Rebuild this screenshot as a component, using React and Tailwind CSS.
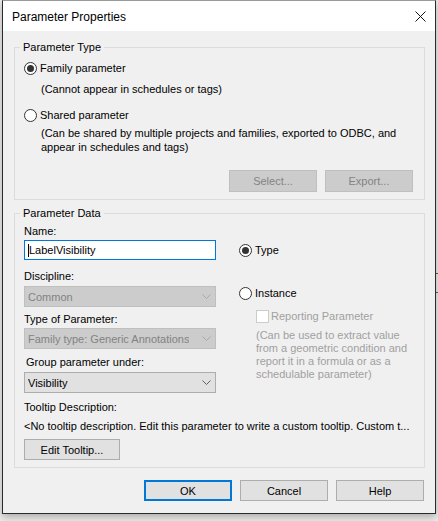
import React from "react";

function Radio({ checked }) {
  return (
    <span className="flex h-[13px] w-[13px] shrink-0 items-center justify-center rounded-full border border-[#333333] bg-white">
      {checked && <span className="h-[7px] w-[7px] rounded-full bg-[#333333]" />}
    </span>
  );
}

function Chevron({ disabled }) {
  return (
    <svg width="9" height="6" viewBox="0 0 9 6" className="shrink-0">
      <path
        d="M0.5 0.5 L4.5 4.5 L8.5 0.5"
        fill="none"
        stroke={disabled ? "#a8a8a8" : "#606060"}
        strokeWidth="1"
      />
    </svg>
  );
}

function Select({ value, disabled }) {
  return (
    <div
      className={
        disabled
          ? "flex h-[21px] w-[192px] items-center justify-between border border-[#bfbfbf] bg-[#cccccc] pl-[3px] pr-[4px] text-[#838383]"
          : "flex h-[21px] w-[192px] items-center justify-between border border-[#adadad] bg-[#e1e1e1] pl-[3px] pr-[4px] text-black"
      }
    >
      <span className="truncate">{value}</span>
      <Chevron disabled={disabled} />
    </div>
  );
}

function Button({ children, disabled, primary, wide }) {
  const base = wide ? "h-[22px] w-[88px]" : "h-[21px] w-[88px]";
  if (disabled) {
    return (
      <div className={`${base} flex items-center justify-center border border-[#bfbfbf] bg-[#cccccc] text-[#838383]`}>
        {children}
      </div>
    );
  }
  if (primary) {
    return (
      <div className={`${base} flex items-center justify-center border-2 border-[#0078d7] bg-[#e1e1e1] text-black`}>
        {children}
      </div>
    );
  }
  return (
    <div className={`${base} flex items-center justify-center border border-[#adadad] bg-[#e1e1e1] text-black`}>
      {children}
    </div>
  );
}

export default function App() {
  return (
    <div className="relative h-[521px] w-[438px] overflow-hidden bg-[#ececec] font-['Liberation_Sans',Arial,sans-serif] text-[11px] leading-[14px] text-black">
      {/* thin marks from the window behind, peeking past the right edge */}
      <span className="absolute left-[436px] top-[273px] h-px w-[2px] bg-[#1e7a1e]" />
      <span className="absolute left-[436px] top-[292px] h-px w-[2px] bg-[#1e7a1e]" />

      <div className="ml-[2px] flex w-[434px] flex-col border-x border-b border-t border-x-[#2a2a2a] border-b-[#2a2a2a] border-t-[#9a9a9a] bg-[#f0f0f0] shadow-[0_3px_8px_rgba(0,0,0,0.28)]">
        {/* title bar */}
        <div className="flex h-[30px] items-center justify-between bg-white pl-[9px] pr-[9px]">
          <span className="pt-[1px] text-[12px] leading-[16px]">Parameter Properties</span>
          <svg width="11" height="11" viewBox="0 0 11 11" className="mt-[1px]">
            <path d="M0.5 0.5 L10.5 10.5 M10.5 0.5 L0.5 10.5" stroke="#111" strokeWidth="1" />
          </svg>
        </div>

        {/* Parameter Type */}
        <fieldset className="ml-[11px] mr-[10px] mt-[9px] border border-[#dcdcdc] p-0">
          <legend className="ml-[5px] px-[3px] leading-[14px]">Parameter Type</legend>
          <div className="flex flex-col pb-[7px] pl-[9px] pr-[11px]">
            <div className="mt-[7px] flex h-[14px] items-center gap-[3px]">
              <Radio checked />
              <span>Family parameter</span>
            </div>
            <div className="mt-[7px] pl-[17px]">(Cannot appear in schedules or tags)</div>
            <div className="mt-[12px] flex h-[14px] items-center gap-[3px]">
              <Radio />
              <span>Shared parameter</span>
            </div>
            <div className="mt-[4px] pl-[17px]">
              (Can be shared by multiple projects and families, exported to ODBC, and
              <br />
              appear in schedules and tags)
            </div>
            <div className="mt-[16px] flex justify-end gap-[8px]">
              <Button disabled wide>Select...</Button>
              <Button disabled wide>Export...</Button>
            </div>
          </div>
        </fieldset>

        {/* Parameter Data */}
        <fieldset className="ml-[11px] mr-[10px] mt-[6px] border border-[#dcdcdc] p-0">
          <legend className="ml-[5px] px-[3px] leading-[14px]">Parameter Data</legend>
          <div className="flex flex-col pb-[7px] pl-[9px] pr-[9px]">
            <div className="flex">
              <div className="flex w-[192px] flex-col">
                <div className="mt-[4px]">Name:</div>
                <div className="relative mt-[2px] flex h-[20px] items-center border border-[#0078d7] bg-white pl-[4px]">
                  <span className="absolute left-[3px] top-[3px] h-[13px] w-px bg-black" />
                  <span>LabelVisibility</span>
                </div>
                <div className="mt-[9px]">Discipline:</div>
                <div className="mt-[3px]">
                  <Select value="Common" disabled />
                </div>
                <div className="mt-[5px]">Type of Parameter:</div>
                <div className="mt-[2px]">
                  <Select value="Family type: Generic Annotations" disabled />
                </div>
                <div className="ml-[2px] mt-[6px]">Group parameter under:</div>
                <div className="mt-[3px]">
                  <Select value="Visibility" />
                </div>
              </div>

              <div className="ml-[23px] flex flex-col">
                <div className="mt-[23px] flex h-[14px] items-center gap-[3px]">
                  <Radio checked />
                  <span>Type</span>
                </div>
                <div className="mt-[29px] flex h-[14px] items-center gap-[3px]">
                  <Radio />
                  <span>Instance</span>
                </div>
                <div className="ml-[17px] mt-[9px] flex h-[14px] items-center gap-[2px] text-[#a0a0a0]">
                  <span className="h-[13px] w-[13px] shrink-0 border border-[#cccccc] bg-white" />
                  <span>Reporting Parameter</span>
                </div>
                <div className="ml-[17px] mt-[6px] leading-[13px] text-[#a0a0a0]">
                  (Can be used to extract value
                  <br />
                  from a geometric condition and
                  <br />
                  report it in a formula or as a
                  <br />
                  schedulable parameter)
                </div>
              </div>
            </div>

            <div className="mt-[7px]">Tooltip Description:</div>
            <div className="mt-[5px] whitespace-nowrap">
              &lt;No tooltip description. Edit this parameter to write a custom tooltip. Custom t...
            </div>
            <div className="mt-[6px] flex">
              <div className="flex h-[21px] w-[96px] items-center justify-center border border-[#adadad] bg-[#e1e1e1]">
                Edit Tooltip...
              </div>
            </div>
          </div>
        </fieldset>

        {/* dialog buttons */}
        <div className="mb-[12px] mr-[11px] mt-[12px] flex justify-end gap-[8px]">
          <Button primary>OK</Button>
          <Button>Cancel</Button>
          <Button>Help</Button>
        </div>
      </div>
    </div>
  );
}
